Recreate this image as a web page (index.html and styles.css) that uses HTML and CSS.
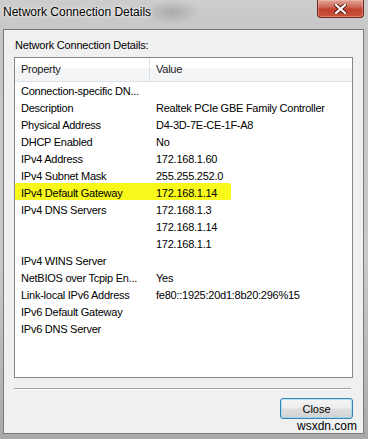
FILE: index.html
```html
<!DOCTYPE html>
<html lang="en">
  <head>
    <meta charset="UTF-8" />
    <meta name="viewport" content="width=device-width, initial-scale=1.0" />
    <title>Network Connection Details</title>
    <link rel="stylesheet" href="styles.css">
  </head>
  <body>
    <div class="window">
      <div class="titlebar">
        <span class="title">Network Connection Details</span>
        <span class="close-x">
          <svg width="13" height="10" viewBox="0 0 13 10">
            <path d="M2 1 L11 9 M11 1 L2 9" stroke="#5a1a12" stroke-width="4" stroke-linecap="square" fill="none" />
            <path d="M2 1 L11 9 M11 1 L2 9" stroke="#fff" stroke-width="2.2" stroke-linecap="square" fill="none" />
          </svg>
        </span>
      </div>
      <div class="client">
        <div class="caption">Network Connection Details:</div>
        <div class="list">
          <div class="list-head">
            <div>Property</div>
            <div>Value</div>
          </div>
          <div class="rows">
            <div class="row"><div>Connection-specific DN...</div><div></div></div>
            <div class="row"><div>Description</div><div>Realtek PCIe GBE Family Controller</div></div>
            <div class="row"><div>Physical Address</div><div>D4-3D-7E-CE-1F-A8</div></div>
            <div class="row"><div>DHCP Enabled</div><div>No</div></div>
            <div class="row"><div>IPv4 Address</div><div>172.168.1.60</div></div>
            <div class="row"><div>IPv4 Subnet Mask</div><div>255.255.252.0</div></div>
            <div class="row marked"><div>IPv4 Default Gateway</div><div>172.168.1.14</div></div>
            <div class="row"><div>IPv4 DNS Servers</div><div>172.168.1.3</div></div>
            <div class="row"><div></div><div>172.168.1.14</div></div>
            <div class="row"><div></div><div>172.168.1.1</div></div>
            <div class="row"><div>IPv4 WINS Server</div><div></div></div>
            <div class="row"><div>NetBIOS over Tcpip En...</div><div>Yes</div></div>
            <div class="row"><div>Link-local IPv6 Address</div><div>fe80::1925:20d1:8b20:296%15</div></div>
            <div class="row"><div>IPv6 Default Gateway</div><div></div></div>
            <div class="row"><div>IPv6 DNS Server</div><div></div></div>
          </div>
        </div>
        <div class="separator"></div>
        <div class="footer">
          <button class="btn">Close</button>
        </div>
        <div class="watermark">wsxdn.com</div>
      </div>
    </div>
  </body>
</html>
```

FILE: styles.css
```css
* {
  margin: 0;
  padding: 0;
  box-sizing: border-box;
}
body {
  width: 368px;
  height: 439px;
  overflow: hidden;
  font-family: "Liberation Sans", Arial, sans-serif;
  color: #000;
}
.window {
  height: 439px;
  display: flex;
  flex-direction: column;
  background:
    radial-gradient(ellipse 28px 12px at 172px 12px, rgba(110, 110, 110, 0.35), rgba(110, 110, 110, 0)),
    linear-gradient(to bottom, #cdcdcd 0%, #c6c6c6 8%, #c9c9c9 60%, #a9a9a9 100%);
}
.titlebar {
  height: 29px;
  display: flex;
  justify-content: space-between;
  align-items: flex-start;
  padding: 0 4px 0 3px;
}
.title {
  font-size: 12px;
  line-height: 14px;
  margin-top: 5px;
  text-shadow: 0 0 5px rgba(255, 255, 255, 0.9), 0 0 2px rgba(255, 255, 255, 0.9);
}
.close-x {
  width: 47px;
  height: 18px;
  display: flex;
  align-items: center;
  justify-content: center;
  border: 1px solid #6e2a20;
  border-top: none;
  border-radius: 0 0 4px 4px;
  background: linear-gradient(to bottom, #e1a597 0%, #d06a58 40%, #c2412c 55%, #c9533c 100%);
  box-shadow: inset 0 0 0 1px rgba(255, 210, 200, 0.35);
}
.client {
  flex: 1;
  margin: 0 4px 5px 3px;
  border: 1px solid #7a7a7a;
  background: #f0f0f0;
  overflow: hidden;
}
.caption {
  font-size: 11px;
  line-height: 14px;
  letter-spacing: -0.2px;
  padding: 8px 0 0 11px;
}
.list {
  margin: 5px 0 0 10px;
  width: 339px;
  height: 321px;
  border: 1px solid #828790;
  background: #fff;
  font-size: 11px;
  letter-spacing: -0.25px;
}
.list-head {
  display: grid;
  grid-template-columns: 135px 1fr;
  height: 24px;
  line-height: 23px;
  background: linear-gradient(to bottom, #ffffff 0%, #ffffff 45%, #f4f5f7 46%, #f3f4f6 100%);
  border-bottom: 1px solid #dde0e5;
  color: #1a1a1a;
}
.list-head div:first-child {
  padding-left: 6px;
  border-right: 1px solid #dde0e5;
}
.list-head div:last-child {
  padding-left: 6px;
}
.rows {
  padding-top: 1px;
}
.row {
  display: grid;
  grid-template-columns: 135px 1fr;
  height: 17px;
  line-height: 17px;
  white-space: nowrap;
}
.row div:first-child {
  padding-left: 6px;
}
.row div:last-child {
  padding-left: 6px;
}
.marked {
  position: relative;
}
.marked::before {
  content: "";
  position: absolute;
  left: 0;
  top: -2px;
  width: 216px;
  height: 17px;
  background: #f8f81a;
  border-radius: 1px 3px 2px 1px;
}
.marked div {
  position: relative;
}
.separator {
  margin: 10px 0 0 10px;
  width: 337px;
  border-top: 1px solid #a0a0a0;
  border-bottom: 1px solid #ffffff;
}
.footer {
  display: flex;
  justify-content: flex-end;
  padding: 8px 10px 0 0;
}
.btn {
  width: 73px;
  height: 21px;
  font-family: "Liberation Sans", Arial, sans-serif;
  font-size: 11px;
  color: #000;
  border: 1px solid #3c7fb1;
  border-radius: 3px;
  background: linear-gradient(to bottom, #f4f4f4 0%, #ececec 48%, #dedede 52%, #d2d2d2 100%);
  box-shadow: inset 0 0 0 1px rgba(120, 220, 250, 0.55);
}
.watermark {
  text-align: right;
  padding-right: 6px;
  font-size: 12px;
  line-height: 14px;
}
```
